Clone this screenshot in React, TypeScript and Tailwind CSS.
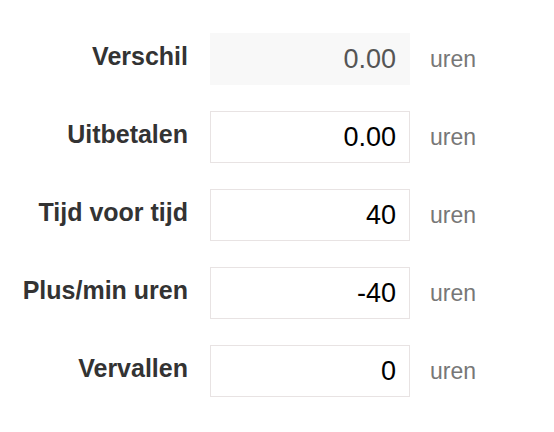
import React from 'react';

type Row = { label: string; value: string; readOnly?: boolean };

const rows: Row[] = [
  { label: 'Verschil', value: '0.00', readOnly: true },
  { label: 'Uitbetalen', value: '0.00' },
  { label: 'Tijd voor tijd', value: '40' },
  { label: 'Plus/min uren', value: '-40' },
  { label: 'Vervallen', value: '0' },
];

const App: React.FC = () => {
  return (
    <div className="min-h-[432px] w-[554px] bg-white pt-[33px] font-['Liberation_Sans',Arial,sans-serif]">
      <div className="flex flex-col gap-[26px]">
        {rows.map(row => (
          <div key={row.label} className="flex items-center">
            <label className="w-[188px] text-right text-[25px] font-bold text-[#333] pb-[4px]">
              {row.label}
            </label>
            <div
              className={
                row.readOnly
                  ? 'ml-[22px] flex h-[52px] w-[200px] items-center justify-end bg-[#f8f8f8] pr-[14px] text-[27px] text-[#555]'
                  : 'ml-[22px] flex h-[52px] w-[200px] items-center justify-end border border-[#e8e3e3] bg-white pr-[13px] text-[27px] text-black'
              }
            >
              {row.value}
            </div>
            <span className="ml-[20px] text-[23px] text-[#777]">uren</span>
          </div>
        ))}
      </div>
    </div>
  );
};

export default App;
